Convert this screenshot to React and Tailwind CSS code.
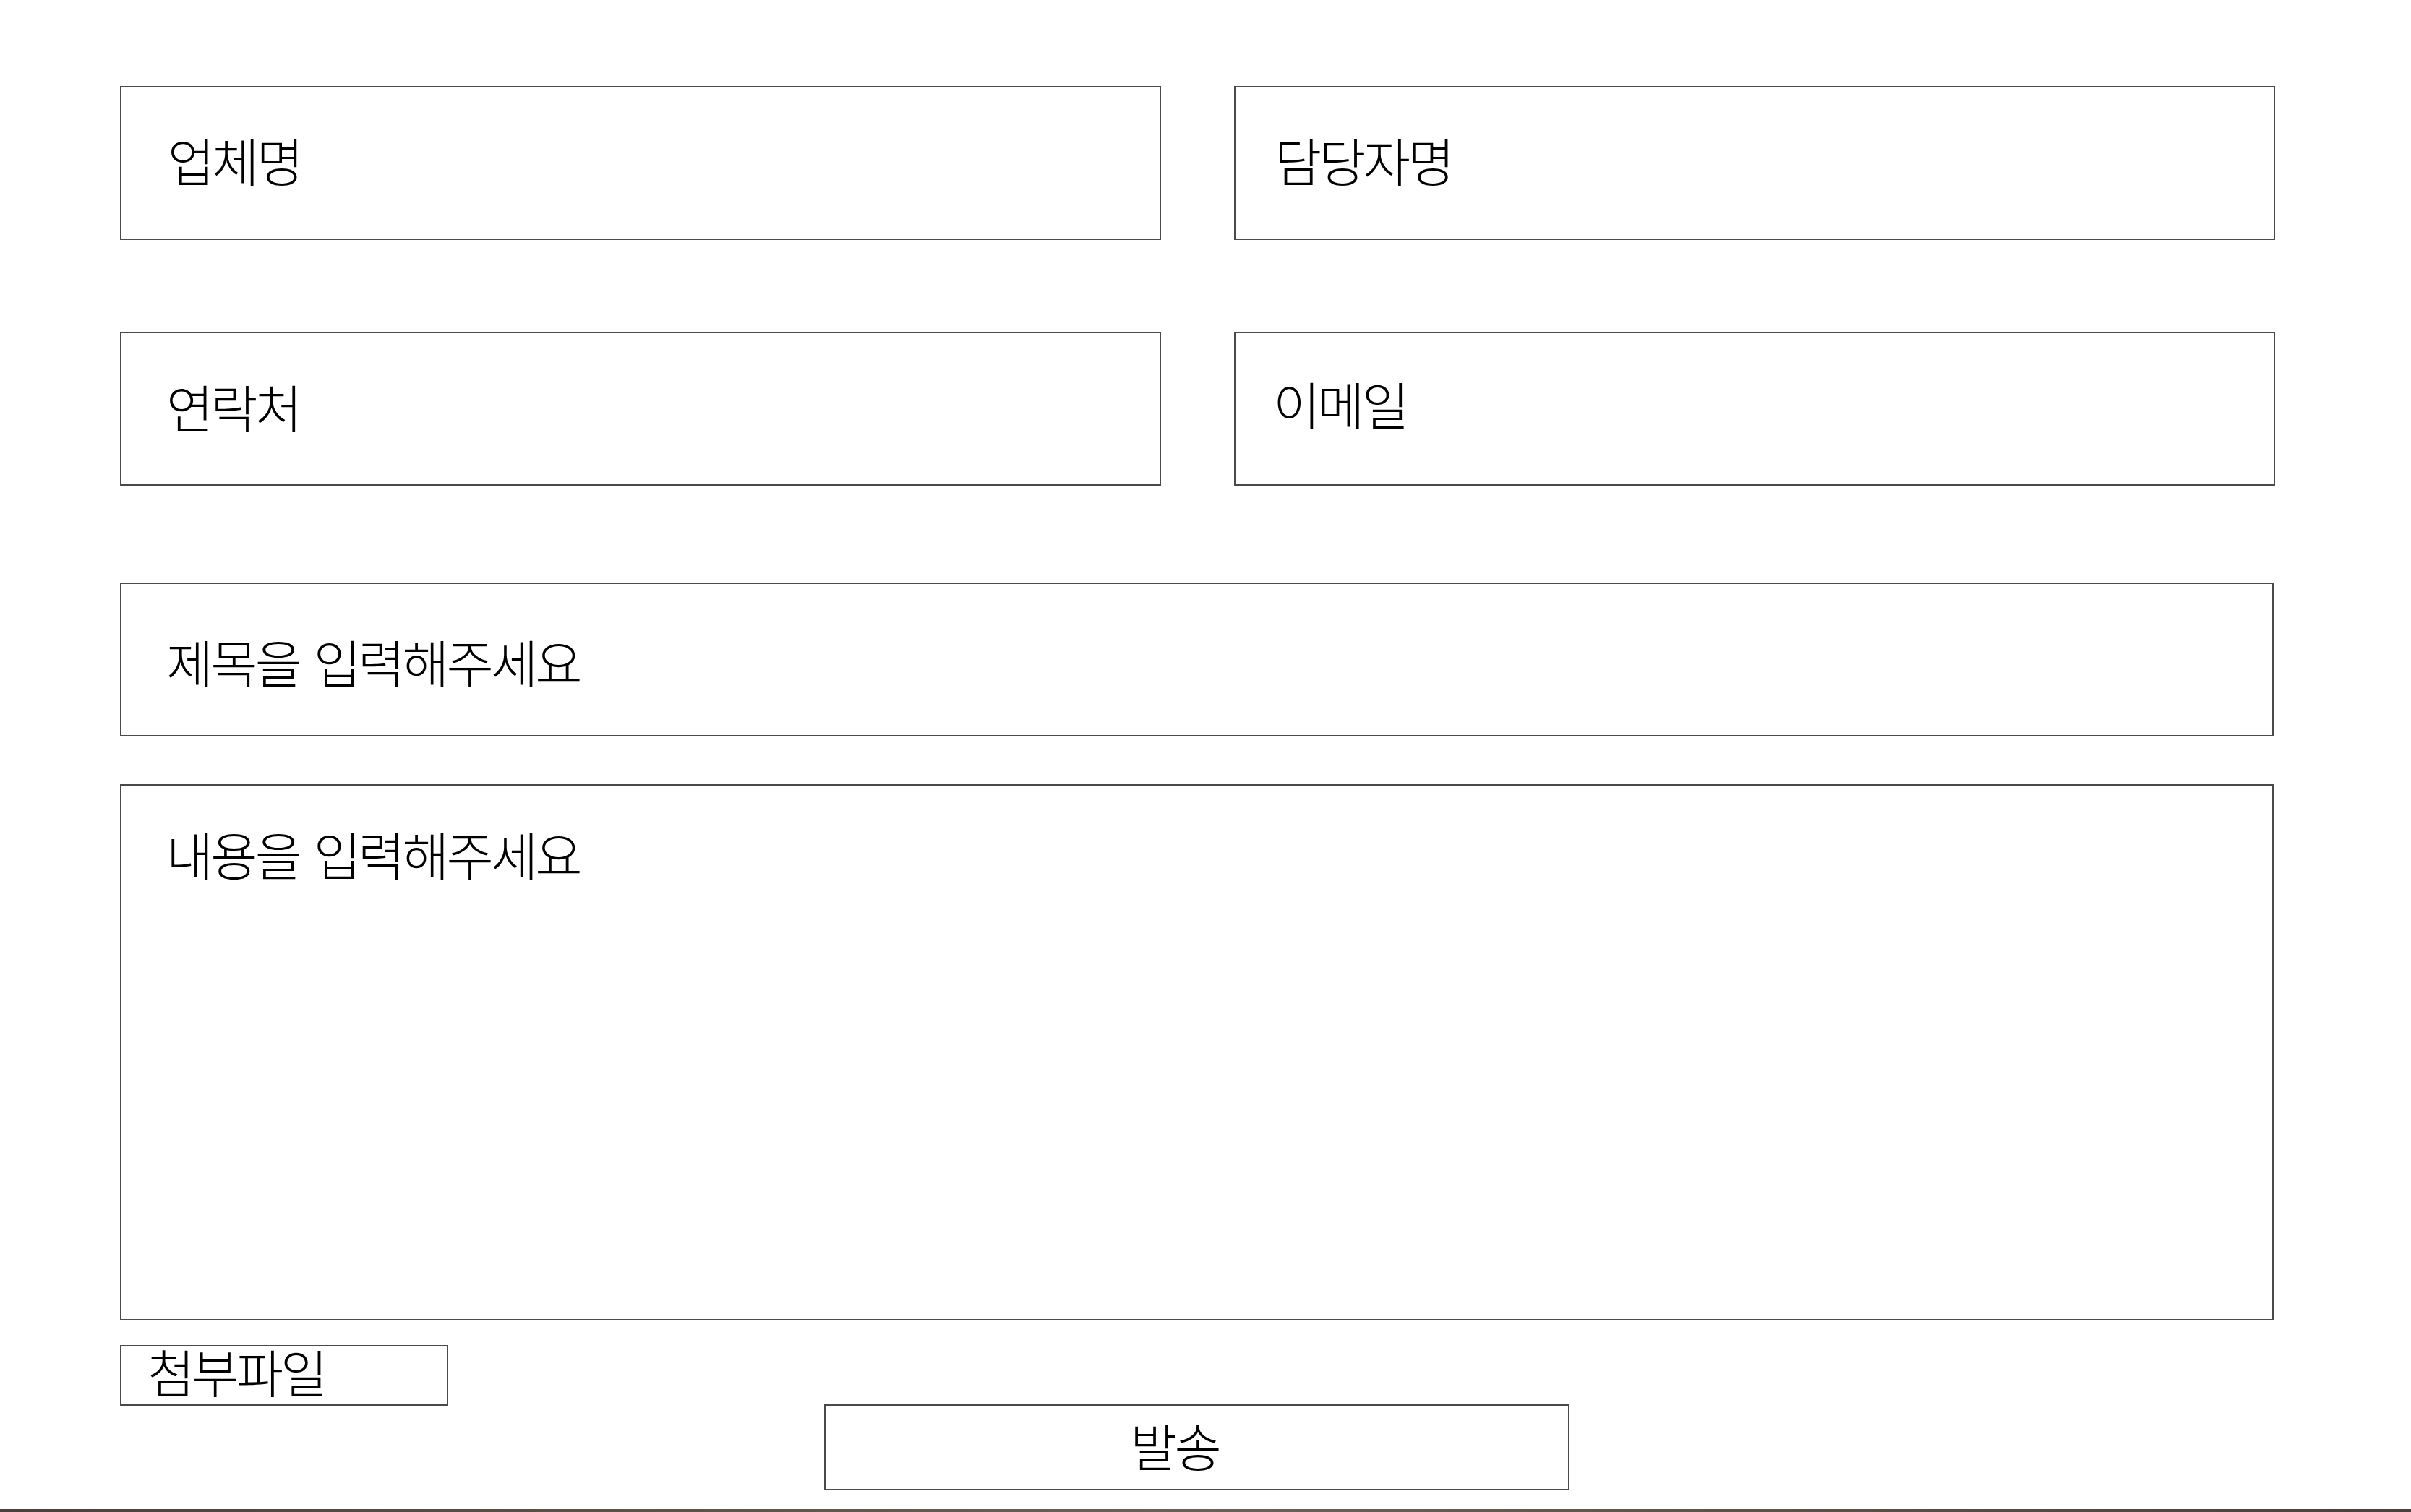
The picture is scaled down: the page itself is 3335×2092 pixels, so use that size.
import React from 'react';

// 문의 폼 (업체 문의)
const fieldBox = "h-[213px] border-2 border-[#4a4a4a] bg-white flex items-center";
const fieldText = "text-[71px] font-light tracking-[-4px] [word-spacing:8px] text-black leading-none";

function Field({ label, pad, offset }) {
  return (
    <div className={`${fieldBox} ${pad}`}>
      <span className={`${fieldText} ${offset}`}>{label}</span>
    </div>
  );
}

export default function App() {
  return (
    <div
      className="w-full h-[2092px] bg-white flex flex-col overflow-hidden"
      style={{ fontFamily: '"Noto Sans CJK KR", "Noto Sans", sans-serif' }}
    >
      <div className="pl-[166px] pt-[119px] flex flex-col">
        {/* 상단 입력 2x2 */}
        <div className="grid grid-cols-[1440px_1440px] gap-x-[101px] gap-y-[127px]">
          <Field label="업체명" pad="pl-[64px]" offset="-mt-[10px]" />
          <Field label="담당자명" pad="pl-[54px]" offset="-mt-[10px]" />
          <Field label="연락처" pad="pl-[62px]" offset="-mt-[8px]" />
          <Field label="이메일" pad="pl-[52px]" offset="-mt-[16px]" />
        </div>

        {/* 제목 */}
        <div className={`${fieldBox} w-[2979px] mt-[134px] pl-[62px]`}>
          <span className={`${fieldText} mt-[4px]`}>제목을 입력해주세요</span>
        </div>

        {/* 내용 */}
        <div className="w-[2979px] h-[742px] mt-[66px] border-2 border-[#4a4a4a] pl-[62px] pt-[58px]">
          <span className={fieldText}>내용을 입력해주세요</span>
        </div>

        {/* 첨부파일 */}
        <div className="w-[454px] h-[84px] mt-[34px] border-2 border-[#4a4a4a] pl-[36px] flex items-start">
          <span className={`${fieldText} -mt-[2px]`}>첨부파일</span>
        </div>

        {/* 발송 */}
        <div className="w-[1031px] h-[119px] ml-[974px] -mt-[2px] border-2 border-[#4a4a4a] flex items-center justify-center">
          <span className={`${fieldText} -ml-[62px] -mt-[8px]`}>발송</span>
        </div>
      </div>

      <div className="mt-auto h-[4px] bg-gradient-to-r from-[#4a4238] via-[#6a6252] to-[#4a4238]" />
    </div>
  );
}
